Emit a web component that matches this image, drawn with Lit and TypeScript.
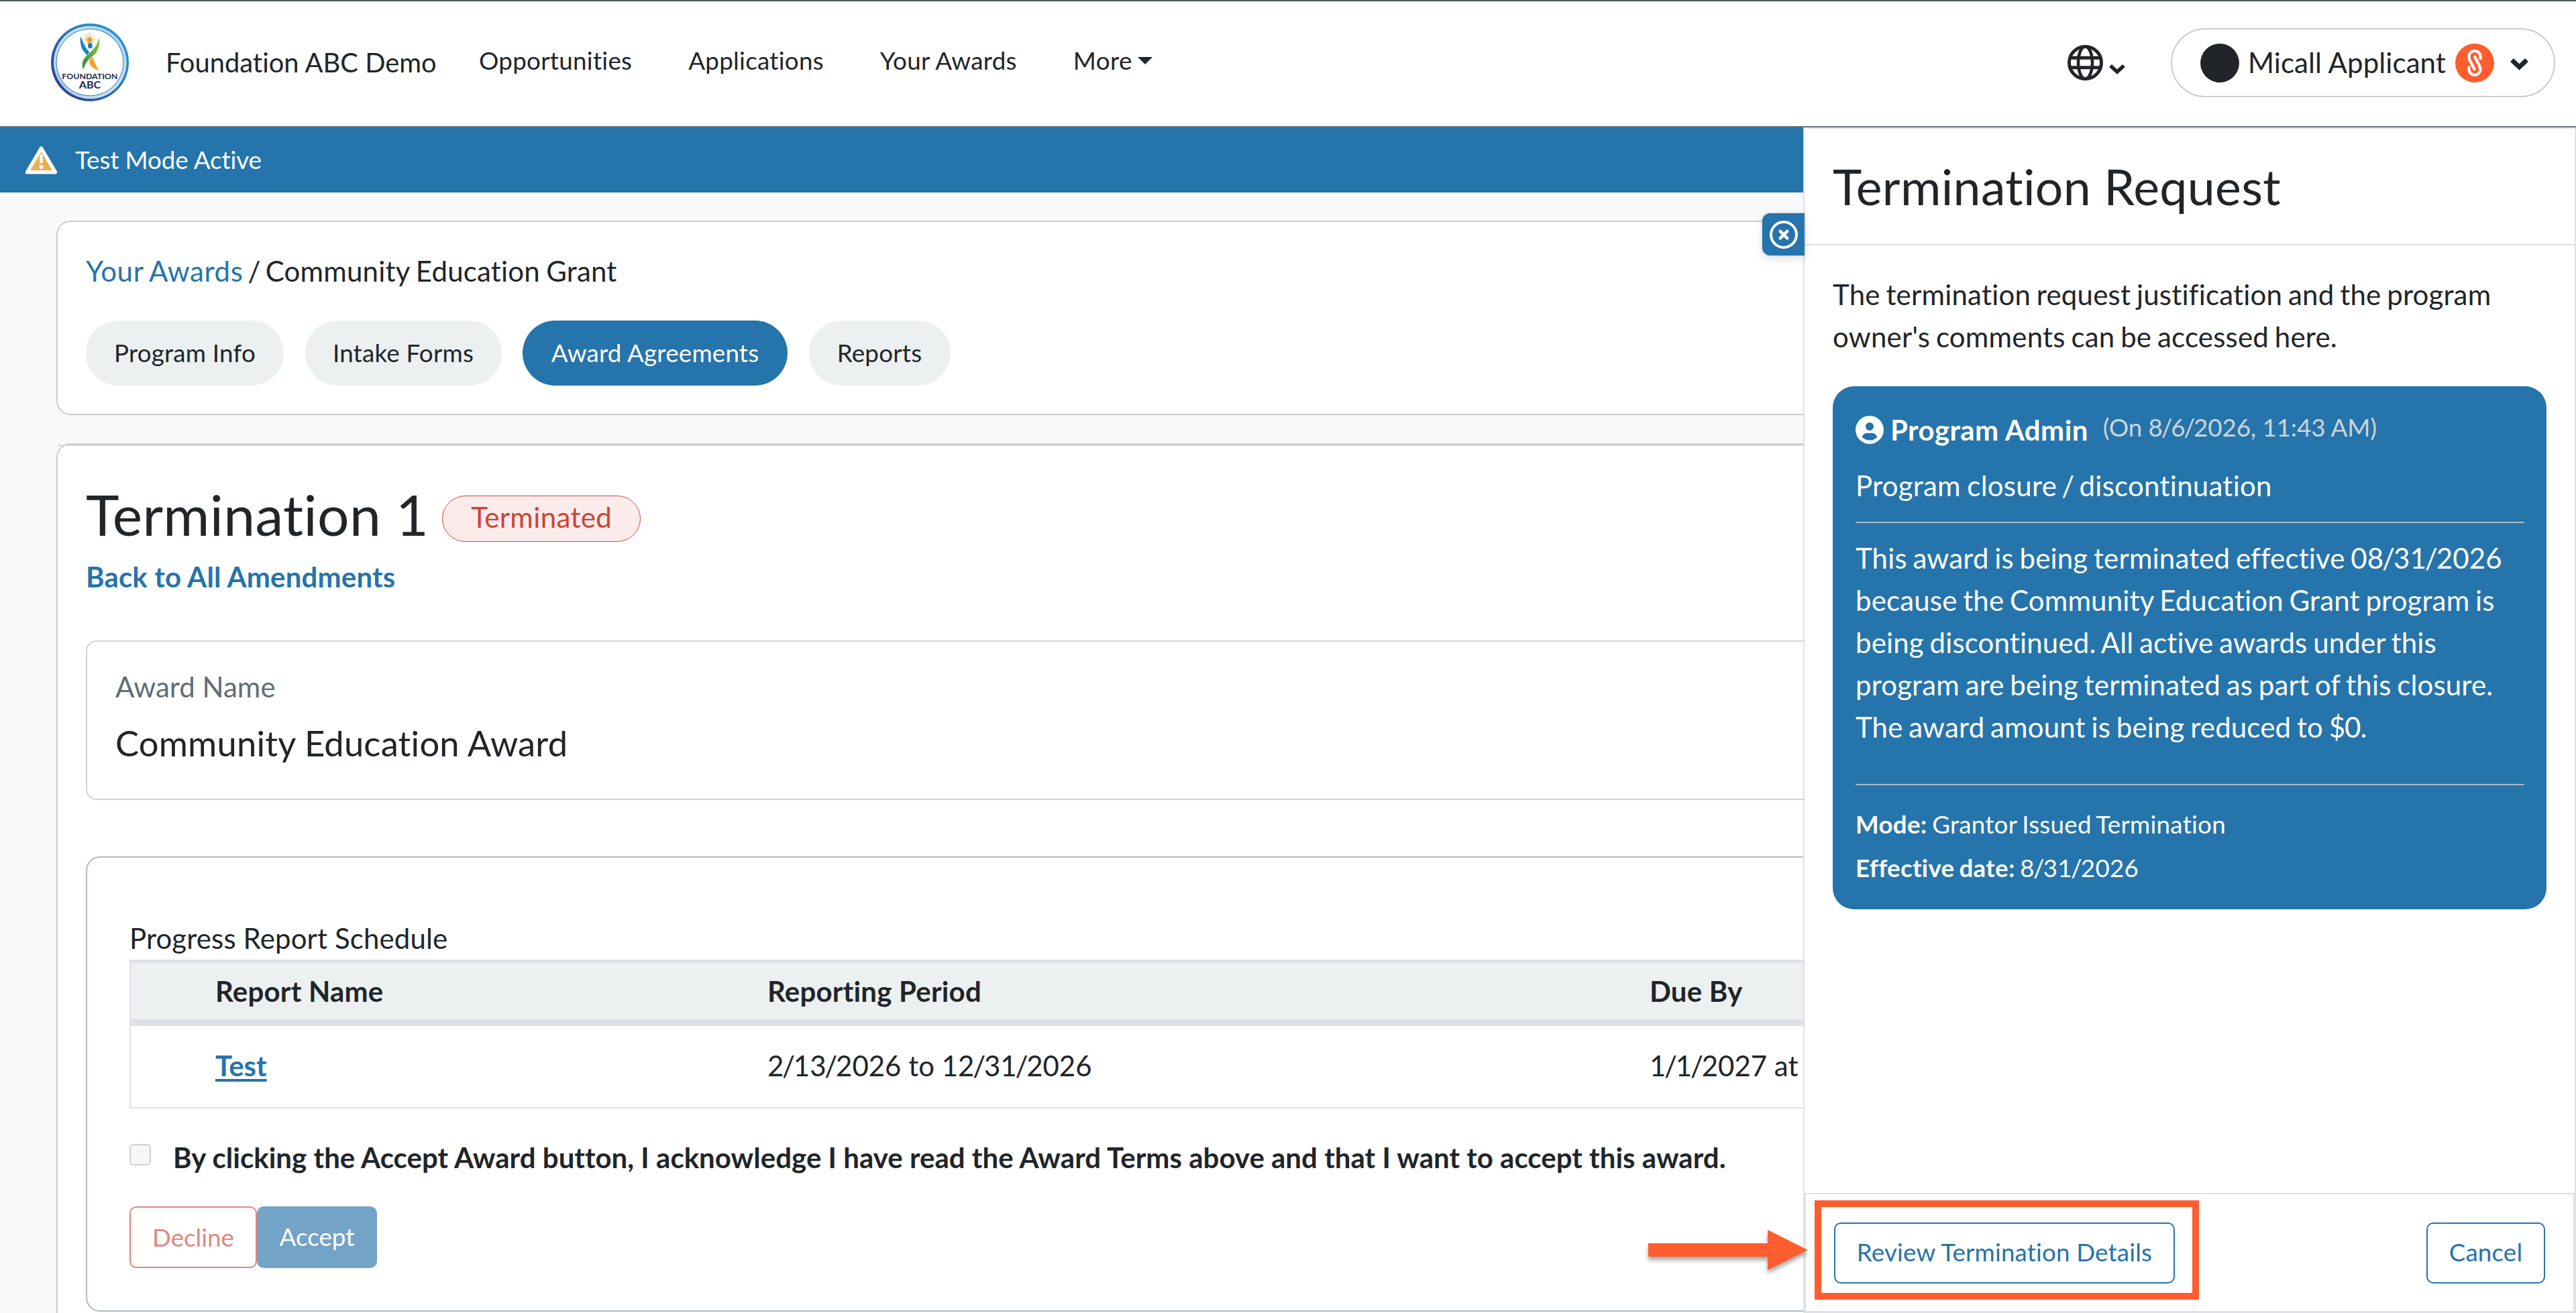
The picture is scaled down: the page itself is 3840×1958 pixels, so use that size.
import { LitElement, html, css, svg } from "lit";
import { customElement } from "lit/decorators.js";

const INK = "#212529";

/** Splits a date so that its slashes can be set tighter than the digits. */
const date = (value: string) =>
  value.split("/").map((part, i) => (i ? html`<span class="sl">/</span>${part}` : part));

const chevron = (w: number, h: number, stroke: number) => html`
  <svg width=${w} height=${h} viewBox="0 0 ${w} ${h}" fill="none" stroke=${INK} stroke-width=${stroke}>
    <path d="M${stroke * 0.36} ${stroke * 0.36}L${w / 2} ${h - stroke * 0.72}L${w - stroke * 0.36} ${stroke * 0.36}"></path>
  </svg>`;

const rays = Array.from({ length: 16 }, (_, i) => {
  const a = (i * Math.PI) / 8;
  const r = i % 2 ? 24 : 31;
  return svg`<path d="M${250 + 14 * Math.cos(a)} ${117 + 14 * Math.sin(a)}L${250 + r * Math.cos(a)} ${117 + r * Math.sin(a)}"></path>`;
});

@customElement("foundation-logo")
export class FoundationLogo extends LitElement {
  static styles = css`
    :host { display: block; width: 120px; height: 120px; }
    text { font-family: Lato, sans-serif; font-weight: 700; fill: #1b2a52; letter-spacing: 0; }
  `;
  render() {
    return html`<svg width="120" height="120" viewBox="72 39 360 360">
      <defs>
        <linearGradient id="ring" x1="0" y1="1" x2="1" y2="0">
          <stop offset="0" stop-color="#2b2f86"></stop><stop offset=".35" stop-color="#2a5fa8"></stop>
          <stop offset=".7" stop-color="#2489c9"></stop><stop offset="1" stop-color="#2596d3"></stop>
        </linearGradient>
        <linearGradient id="inner" x1="0" y1="0" x2="1" y2="1">
          <stop offset="0" stop-color="#dcebf8"></stop><stop offset=".45" stop-color="#a9cdeb"></stop>
          <stop offset="1" stop-color="#d5e7f5"></stop>
        </linearGradient>
        <linearGradient id="leaf" x1="0" y1="1" x2="1" y2="0">
          <stop offset="0" stop-color="#2f8d46"></stop><stop offset="1" stop-color="#8cc63f"></stop>
        </linearGradient>
      </defs>
      <circle cx="252" cy="219" r="174" fill="url(#ring)"></circle>
      <circle cx="253" cy="219" r="163" fill="url(#inner)"></circle>
      <circle cx="252" cy="219" r="151" fill="#2f7fc0"></circle>
      <circle cx="252" cy="219" r="148" fill="#fff"></circle>
      <g stroke="#f3a63a" stroke-width="2.5">${rays}</g>
      <circle cx="250" cy="118" r="12" fill="#f59a23"></circle>
      <path d="M210 101c-3 27 2 54 14 68l14 18 12-14c-12-12-20-24-26-40-5-12-10-20-14-32z" fill="#1f7fc4"></path>
      <path d="M262 194c-10 8-14 16-12 24 3 16 14 32 44 34-14-12-18-32-26-46z" fill="#f5a02b"></path>
      <path d="M292 107c8 34-4 66-28 84-22 18-32 32-42 61-9-30-2-46 18-66 28-26 46-40 52-79z" fill="url(#leaf)"></path>
      <ellipse cx="253" cy="144" rx="10" ry="13" fill="#1d76bd"></ellipse>
      <text x="127" y="294" font-size="34" textLength="249" lengthAdjust="spacingAndGlyphs">FOUNDATION</text>
      <text x="203" y="336" font-size="45" textLength="98" lengthAdjust="spacingAndGlyphs">ABC</text>
    </svg>`;
  }
}

@customElement("site-header")
export class SiteHeader extends LitElement {
  static styles = css`
    :host { display: flex; align-items: flex-start; box-sizing: border-box; height: 190px; flex: none;
      border-top: 2px solid #45575d; border-bottom: 2px solid #64757a; background: #fff; padding: 0 31px 0 74px; color: #212529; }
    foundation-logo { margin-top: 31px; }
    svg { display: block; }
    .brand { margin: 60px 0 0 53px; width: 467px; font-size: 39.9px; line-height: 62px; white-space: nowrap; }
    .nav { display: flex; margin-top: 57px; gap: 84px; font-size: 36.75px; line-height: 62px; white-space: nowrap; letter-spacing: .27px; }
    .more { display: flex; gap: 8px; letter-spacing: .4px; }
    .caret { margin-top: 26px; border: 11px solid transparent; border-top-color: #212529; border-bottom: 0; height: 0; }
    .lang { display: flex; margin: 65px 68px 0 auto; gap: 9px; }
    .lang svg + svg { margin-top: 29px; }
    .user { display: flex; align-items: center; box-sizing: border-box; width: 573px; height: 103px; margin-top: 40px;
      border: 2px solid #ccc; border-radius: 52px; padding-left: 42px; font-size: 42px; white-space: nowrap; }
    .dot { width: 58px; height: 58px; border-radius: 50%; background: #212529; }
    .name { width: 309px; margin-left: 13px; line-height: 63px; letter-spacing: .1px; }
    .user .chev { margin: 4px 0 0 24px; }
  `;
  render() {
    return html`
      <foundation-logo></foundation-logo>
      <div class="brand">Foundation ABC Demo</div>
      <nav class="nav">
        <span>Opportunities</span><span>Applications</span><span>Your Awards</span>
        <span class="more">More<i class="caret"></i></span>
      </nav>
      <div class="lang">
        <svg width="53" height="53" viewBox="0 0 53 53" fill="none" stroke=${INK} stroke-width="5">
          <circle cx="26.5" cy="26.5" r="24"></circle>
          <ellipse cx="26.5" cy="26.5" rx="10.5" ry="24" stroke-width="4.6"></ellipse>
          <path d="M4 19.2H49M4 33.8H49"></path>
        </svg>
        ${chevron(24, 15, 5.5)}
      </div>
      <div class="user">
        <div class="dot"></div>
        <div class="name">Micall Applicant</div>
        <svg width="58" height="58" viewBox="0 0 58 58">
          <circle cx="29" cy="29" r="29" fill="#fe5d2f"></circle>
          <g fill="none" stroke="#fff" stroke-width="4.2" stroke-linecap="round">
            <path d="M37.5 22.5V19.3A8.5 8.5 0 0 0 20.5 19.3C20.5 22 21 23.5 22 25.5L28.6 38.2"></path>
            <path d="M29.2 19.8L36 33C37 35 37.5 36.5 37.5 38.3A8.5 8.5 0 0 1 20.5 38.3V35.2"></path>
          </g>
        </svg>
        <div class="chev">${chevron(27, 18, 7)}</div>
      </div>`;
  }
}

@customElement("termination-panel")
export class TerminationPanel extends LitElement {
  static styles = css`
    :host { display: flex; flex-direction: column; box-sizing: border-box; background: #fff; border: 2px solid #dee2e6; border-bottom: 0;
      color: #212529; }
    svg { display: block; }
    .sl { margin: 0 -0.054em; }
    .close { position: absolute; left: -63px; top: 126px; width: 63px; height: 63px; display: grid; place-items: center;
      background: #2574ab; border-radius: 12px 0 0 12px; box-shadow: 0 6px 14px rgba(0,0,0,.1), 0 0 0 2px rgba(120,130,170,.14); }
    .head { height: 172px; border-bottom: 2px solid #dee2e6; padding-left: 42px; font-size: 73.5px; line-height: 172px; white-space: nowrap;
      letter-spacing: .3px; }
    .body { flex: 1; padding: 42px 42px 0; font-size: 42px; line-height: 63px; }
    .intro { white-space: nowrap; word-spacing: -2.2px; letter-spacing: .2px; }
    .card { box-sizing: border-box; height: 780px; margin-top: 42px; border-radius: 32px; background: #2574ab; color: #fff; padding: 33px 33px 0 34px;
      white-space: nowrap; }
    .who { display: flex; align-items: center; height: 63px; }
    .who b { margin-left: 10px; letter-spacing: .4px; padding-top: 1px; }
    .when { font-size: 36.75px; color: #ced4da; margin: -7px 0 0 22px; letter-spacing: -.1px; }
    .reason { margin-top: 21px; letter-spacing: .25px; word-spacing: -1.6px; }
    .rule { height: 2px; background: #a9b9c5; }
    .reason + .rule { margin-top: 22px; }
    .text { margin: 21px 0 53px; letter-spacing: .15px; word-spacing: -2.2px; }
    .tight { letter-spacing: -1px; }
    .meta { font-size: 36.75px; line-height: 65px; letter-spacing: .25px; word-spacing: -2px; }
    .rule + .meta { margin-top: 26px; }
    .foot { box-sizing: border-box; height: 179px; display: flex; justify-content: space-between; border: 2px solid #dee2e6; border-width: 2px 2px 3px;
      padding: 42px 42px 0; }
    .btn { box-sizing: border-box; height: 91px; border: 2px solid #2574ab; border-radius: 10px; color: #2574ab; font-size: 36.75px;
      line-height: 85px; text-align: center; width: 508px; white-space: nowrap; letter-spacing: .15px; }
    .btn.small { width: 177px; }
  `;
  render() {
    return html`
      <div class="close">
        <svg width="42" height="42" viewBox="0 0 42 42" fill="none" stroke="#fff" stroke-width="4">
          <circle cx="21" cy="21" r="19"></circle>
          <path d="M15.8 15.8L26.2 26.2M26.2 15.8L15.8 26.2" stroke-width="4.6" stroke-linecap="round"></path>
        </svg>
      </div>
      <div class="head">Termination Request</div>
      <div class="body">
        <div class="intro">The termination request justification and the program<br />owner's comments can be accessed here.</div>
        <div class="card">
          <div class="who">
            <svg width="42" height="42" viewBox="0 0 42 42">
              <circle cx="21" cy="21" r="21" fill="#fff"></circle>
              <circle cx="21" cy="16" r="6" fill="#2574ab"></circle>
              <path d="M9.5 31.5C11.5 27.5 14.5 25.8 18 25.8H24C27.5 25.8 30.5 27.5 32.5 31.5C29.5 34.8 25.5 36.6 21 36.6S12.5 34.8 9.5 31.5Z" fill="#2574ab"></path>
            </svg>
            <b>Program Admin</b>
            <span class="when">(On ${date("8/6/2026")}, 11:43 AM)</span>
          </div>
          <div class="reason">Program closure <span class="sl">/</span> discontinuation</div>
          <div class="rule"></div>
          <div class="text">
            This award is being terminated effective ${date("08/31/2026")}<br />because the Community Education Grant program is<br />being
            discontinued. All active awards under this<br />program are being terminated as part of this closure.<br />The award
            amount is being reduced to <span class="tight">$0.</span>
          </div>
          <div class="rule"></div>
          <div class="meta"><b>Mode:</b> Grantor Issued Termination</div>
          <div class="meta"><b>Effective date:</b> ${date("8/31/2026")}</div>
        </div>
      </div>
      <div class="foot">
        <div class="btn">Review Termination Details</div>
        <div class="btn small">Cancel</div>
      </div>`;
  }
}

@customElement("app-root")
export class AppRoot extends LitElement {
  static styles = css`
    :host { display: flex; flex-direction: column; position: relative; width: 3840px; height: 1958px; overflow: hidden; background: #f8f9fb;
      font-family: Lato, "Liberation Sans", sans-serif; font-variant-ligatures: none; color: #212529; }
    svg { display: block; }
    .sl { margin: 0 -0.054em; }
    .banner { flex: none; height: 97px; box-sizing: border-box; background: #2574ab; color: #fff; display: flex; align-items: center;
      padding-left: 37px; font-size: 36.75px; gap: 26px; }
    .banner span { letter-spacing: -.1px; padding-bottom: 2px; }
    .page { flex: none; padding: 42px 84px 0; }
    .card { box-sizing: border-box; background: #fff; border: 2px solid #ccc; border-radius: 21px; padding: 0 42px; }
    .crumbs { height: 290px; }
    .path { padding-top: 42px; font-size: 42px; line-height: 63px; letter-spacing: .2px; word-spacing: -1.7px; }
    .path a { color: #2574ab; letter-spacing: .6px; }
    .tabs { display: flex; gap: 31.5px; margin-top: 42px; }
    .tab { box-sizing: border-box; height: 97px; line-height: 96px; border-radius: 49px; background: #ecf0f1; font-size: 36.75px; text-align: center;
      letter-spacing: .2px; }
    .info { width: 295px; }
    .intake { width: 293px; }
    .agree { width: 395px; }
    .reports { width: 211px; }
    .tab.on { background: #2574ab; color: #fff; }
    .detail { margin-top: 42px; height: 1340px; }
    .detail::before { content: ""; display: block; height: 2px; margin: 0 -42px; background: #d3d3d3; }
    .title { display: flex; align-items: center; height: 100px; margin-top: 52px; font-size: 84px; line-height: 100px; letter-spacing: .35px; }
    .badge { box-sizing: border-box; width: 296px; height: 69px; margin: 12px 0 0 20px; text-align: center; border: 1.5px solid #cf4a3c;
      border-radius: 35px; background: #fbebea; color: #cb4437; font-size: 42px; line-height: 62px; }
    .back { display: block; margin-top: 12px; color: #2574ab; font-weight: 700; font-size: 42px; line-height: 63px; letter-spacing: .15px; }
    .award { height: 238px; margin-top: 63px; border-color: #d2d2d2; border-radius: 16px; padding: 36px 42px 0; }
    .label { font-size: 42px; line-height: 63px; color: #5f6e75; }
    .value { margin-top: 13px; font-size: 52.5px; line-height: 78px; letter-spacing: .2px; }
    .terms { height: 679px; margin-top: 84px; border-color: #b0b8bd; padding: 89px 63px 0; font-size: 42px; line-height: 63px; }
    .sched { letter-spacing: .12px; }
    .table { border: 2px solid #dde1e6; border-top-width: 5px; }
    .row { display: grid; grid-template-columns: 823px 1315px 1fr; padding-left: 126px; white-space: nowrap; }
    .row.h { height: 84px; border-bottom: 10px solid #dde1e6; background: #ecf0f1; line-height: 84px; font-weight: 700; letter-spacing: .2px; }
    .row.d { height: 121px; line-height: 119px; }
    .row.d a { color: #2574ab; font-weight: 700; text-decoration: underline; text-decoration-thickness: 4px; text-underline-offset: 4px; }
    .ack { display: flex; margin-top: 42px; font-weight: 700; white-space: nowrap; letter-spacing: .015px; }
    .box { box-sizing: border-box; width: 32px; height: 32px; margin: 11px 33px 0 0; border: 2px solid #cfcfcf; border-radius: 6px; background: #f7f7f7; }
    .acts { display: flex; margin-top: 41px; font-size: 36.75px; }
    .btn { box-sizing: border-box; height: 92px; border-radius: 10px; line-height: 88px; text-align: center; }
    .decline { width: 190px; border: 2px solid #e0877e; color: #e0877e; }
    .accept { width: 179px; background: #73a4c8; color: #fff; line-height: 91px; }
    termination-panel { position: absolute; left: 2688px; top: 190px; width: 1152px; height: 1768px; }
    .frame { position: absolute; box-sizing: border-box; left: 2705px; top: 1790px; width: 573px; height: 148px; border: 10px solid #fe5d2f; }
    .arrow { position: absolute; left: 2457px; top: 1834px; filter: drop-shadow(0 5px 3px rgba(0,0,0,.35)); overflow: visible; }
  `;
  render() {
    return html`
      <site-header></site-header>
      <div class="banner">
        <svg width="49" height="44" viewBox="0 0 49 44">
          <path d="M24.5 4L45.5 39.8H3.5Z" fill="#f0ad4e" stroke="#fff" stroke-width="5.4" stroke-linejoin="round"></path>
          <path d="M24.5 15V24.5" stroke="#fff" stroke-width="4.4" stroke-linecap="round"></path>
          <circle cx="24.5" cy="32" r="3" fill="#fff"></circle>
        </svg>
        <span>Test Mode Active</span>
      </div>
      <main class="page">
        <section class="card crumbs">
          <div class="path"><a>Your Awards</a> <span class="sl">/</span> Community Education Grant</div>
          <div class="tabs">
            <div class="tab info">Program Info</div><div class="tab intake">Intake Forms</div>
            <div class="tab agree on">Award Agreements</div><div class="tab reports">Reports</div>
          </div>
        </section>
        <section class="card detail">
          <div class="title">Termination 1<span class="badge">Terminated</span></div>
          <a class="back">Back to All Amendments</a>
          <div class="card award">
            <div class="label">Award Name</div>
            <div class="value">Community Education Award</div>
          </div>
          <div class="card terms">
            <div class="sched">Progress Report Schedule</div>
            <div class="table">
              <div class="row h"><span>Report Name</span><span>Reporting Period</span><span>Due By</span></div>
              <div class="row d">
                <span><a>Test</a></span><span>${date("2/13/2026")} to ${date("12/31/2026")}</span><span>${date("1/1/2027")} at</span>
              </div>
            </div>
            <div class="ack">
              <span class="box"></span>By clicking the Accept Award button, I acknowledge I have read the Award Terms above and that I want
              to accept this award.
            </div>
            <div class="acts"><div class="btn decline">Decline</div><div class="btn accept">Accept</div></div>
          </div>
        </section>
      </main>
      <termination-panel></termination-panel>
      <div class="frame"></div>
      <svg class="arrow" width="238" height="60" viewBox="0 0 238 60">
        <path d="M0 20H178V0L238 30L178 60V40H0Z" fill="#fe5d2f"></path>
      </svg>`;
  }
}
